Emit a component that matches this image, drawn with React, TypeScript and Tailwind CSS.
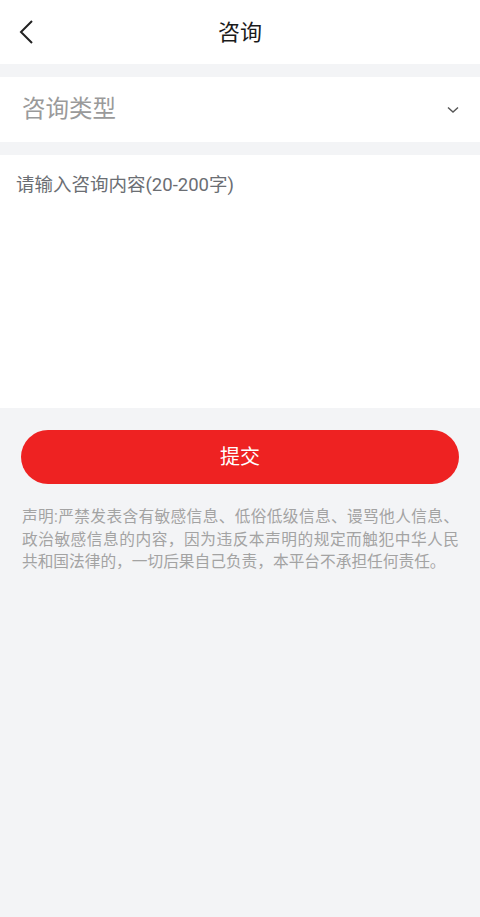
const font = { fontFamily: 'Roboto, "Noto Sans CJK SC", sans-serif' };

export default function App() {
  return (
    <div className="min-h-[917px] w-[480px] bg-[#f3f4f6]" style={font}>
      <header className="relative flex h-16 items-center justify-center bg-white">
        <button className="absolute left-[16px] top-[18px] text-[#222]">
          <svg width="22" height="28" viewBox="0 0 22 28" fill="none">
            <path d="M16 3 L5 14 L16 25" stroke="currentColor" strokeWidth="2" />
          </svg>
        </button>
        <h1 className="text-[22px] text-[#1a1a1a]">咨询</h1>
      </header>

      <div className="mt-[13px] flex h-[65px] items-center justify-between bg-white pl-[22px] pr-[20px]">
        <span className="text-[23.5px] text-[#9a9a9a]">咨询类型</span>
        <svg width="14" height="10" viewBox="0 0 14 10" fill="none">
          <path d="M2 2.5 L7 7 L12 2.5" stroke="#555" strokeWidth="1.4" />
        </svg>
      </div>

      <div className="mt-[13px] h-[253px] bg-white px-[16px] pt-[17px]">
        <p className="text-[18.5px] text-[#6b6e73]">请输入咨询内容(20-200字)</p>
      </div>

      <div className="px-[21px] pt-[22px]">
        <button className="flex h-[54px] w-full items-center justify-center rounded-full bg-[#ee2222] text-[20px] text-white">
          提交
        </button>
        <p className="mt-[22px] pl-[1px] text-justify text-[15.7px] leading-[22.5px] text-[#a3a3a3]">
          声明:严禁发表含有敏感信息、低俗低级信息、谩骂他人信息、政治敏感信息的内容，因为违反本声明的规定而触犯中华人民共和国法律的，一切后果自己负责，本平台不承担任何责任。
        </p>
      </div>
    </div>
  );
}
